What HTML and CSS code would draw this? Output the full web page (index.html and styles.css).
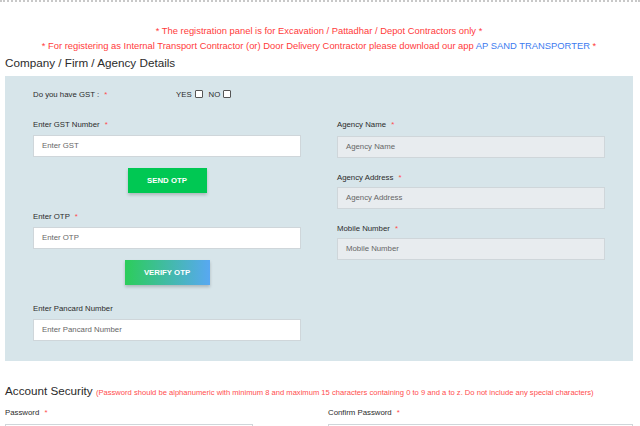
FILE: index.html
```html
<!DOCTYPE html>
<html>
<head>
<meta charset="utf-8">
<link rel="stylesheet" href="styles.css">
</head>
<body>
<div class="topline"></div>
<div class="page">
  <p class="notice n1">* The registration panel is for Excavation / Pattadhar / Depot Contractors only *</p>
  <p class="notice n2">* For registering as Internal Transport Contractor (or) Door Delivery Contractor please download our app <span class="app">AP SAND TRANSPORTER</span> *</p>
  <h2 class="section-title">Company / Firm / Agency Details</h2>
  <div class="panel">
    <div class="col col-left">
      <div class="gst-row">
        <span class="lbl">Do you have GST : <span class="req">*</span></span>
        <span class="choices">
          <span class="choice">YES <span class="cb"></span></span>
          <span class="choice">NO <span class="cb"></span></span>
        </span>
      </div>
      <label class="lbl field-lbl first">Enter GST Number <span class="req">*</span></label>
      <div class="input white">Enter GST</div>
      <div class="btn-row"><button class="btn send">SEND OTP</button></div>
      <label class="lbl field-lbl">Enter OTP <span class="req">*</span></label>
      <div class="input white">Enter OTP</div>
      <div class="btn-row"><button class="btn verify">VERIFY OTP</button></div>
      <label class="lbl field-lbl">Enter Pancard Number</label>
      <div class="input white">Enter Pancard Number</div>
    </div>
    <div class="col col-right">
      <label class="lbl field-lbl rfirst">Agency Name <span class="req">*</span></label>
      <div class="input grey">Agency Name</div>
      <label class="lbl field-lbl r">Agency Address <span class="req">*</span></label>
      <div class="input grey">Agency Address</div>
      <label class="lbl field-lbl r">Mobile Number <span class="req">*</span></label>
      <div class="input grey">Mobile Number</div>
    </div>
  </div>
  <h2 class="section-title sec2">Account Security <span class="hint">(Password should be alphanumeric with minimum 8 and maximum 15 characters containing 0 to 9 and a to z. Do not include any special characters)</span></h2>
  <div class="pw-grid">
    <div>
      <label class="lbl">Password <span class="req">*</span></label>
      <div class="input white pw"></div>
    </div>
    <div>
      <label class="lbl">Confirm Password <span class="req">*</span></label>
      <div class="input white pw"></div>
    </div>
  </div>
</div>
</body>
</html>
```
FILE: styles.css
```css
* { box-sizing: border-box; }
html, body { margin: 0; padding: 0; background: #fff; }
body { font-family: "Liberation Sans", Arial, sans-serif; color: #333; width: 640px; height: 426px; overflow: hidden; }
.topline { height: 2px; border-top: 2px dotted #c8c8c8; }
.page { padding: 0 7px 0 5px; }
.notice { margin: 0; text-align: center; color: #ff3b3b; font-size: 9.4px; line-height: 14px; }
.n1 { margin-top: 22px; }
.n2 { margin-top: 1px; }
.app { color: #3d7bf0; }
.section-title { margin: 1px 0 0; font-weight: normal; font-size: 11.7px; line-height: 18px; color: #2b2b2b; }
.panel { margin-top: 4px; background: #d7e5ea; display: flex; gap: 36px; padding: 0 28px 20px; width: 628px; height: 285px; }
.col { flex: 0 0 268px; display: flex; flex-direction: column; }
.lbl { font-size: 7.8px; color: #2b2b2b; }
.req { color: #ff4d4d; margin-left: 3px; }
.gst-row { display: flex; margin-top: 13px; height: 12px; align-items: center; }
.gst-row .lbl { width: 143px; }
.choices { display: flex; gap: 6px; font-size: 7.8px; color: #2b2b2b; }
.choice { display: inline-flex; align-items: center; gap: 3px; }
.cb { display: inline-block; width: 8px; height: 8px; border: 1px solid #555; border-radius: 1px; background: #fff; }
.field-lbl { display: block; height: 12px; line-height: 12px; margin-top: 6px; margin-bottom: 4px; }
.first { margin-top: 20px; }
.rfirst { margin-top: 43px; margin-bottom: 5px; }
.r { margin-top: 14px; margin-bottom: 3px; }
.input { height: 22px; border: 1px solid #cfd6da; font-size: 7.8px; color: #666; padding-left: 8px; line-height: 20px; }
.white { background: #fff; }
.grey { background: #e8ecef; }
.btn-row { display: flex; justify-content: center; margin-top: 11px; margin-bottom: 12px; }
.btn { border: none; height: 25px; color: #fff; font-family: "Liberation Sans", Arial, sans-serif; font-weight: bold; font-size: 7.8px; box-shadow: 0 2px 3px rgba(0,0,0,0.2); padding: 0; }
.send { width: 79px; background: #00c853; }
.verify { width: 85px; background: linear-gradient(90deg, #2ccd5a, #58a8f2); }
.sec2 { margin-top: 21px; }
.hint { font-size: 7.6px; color: #ff4d4d; }
.pw-grid { display: grid; grid-template-columns: 248px 305px; gap: 75px; margin-top: 6px; }
.pw-grid .lbl { display: block; height: 12px; }
.pw { margin-top: 4px; }
```
